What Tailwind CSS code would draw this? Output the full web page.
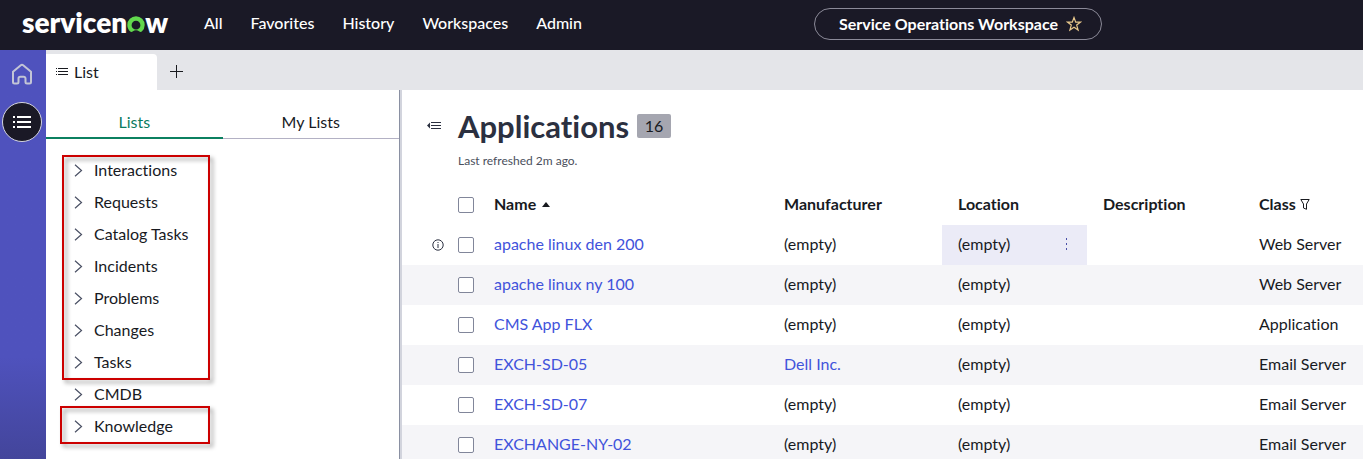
<!DOCTYPE html>
<html lang="en">
<head>
  <meta charset="UTF-8">
  <meta name="viewport" content="width=device-width, initial-scale=1.0">
  <title>Service Operations Workspace</title>
  <script src="https://cdn.jsdelivr.net/npm/@tailwindcss/browser@4"></script>
</head>
<body class="h-screen overflow-hidden flex flex-col bg-white font-['Lato',sans-serif] [font-variant-ligatures:none] text-base text-[#181a1f]">

  <!-- Top bar -->
  <header class="h-[50px] shrink-0 flex items-center bg-[#1a1926] text-white">
    <a href="#" class="ml-[22px] w-[182px] shrink-0 flex items-center text-[28px] leading-8 font-extrabold pb-[6px]" aria-label="servicenow">
      <span>servicen</span>
      <svg class="w-[18px] h-[17px] mt-1 shrink-0" viewBox="0 0 18 17" fill="#62d84e">
        <path d="M9 .3A8.700 8.700 0 0 0 .3 9c0 2.600 1.100 4.900 2.900 6.500.7.600 1.700.700 2.400.100a5.700 5.700 0 0 1 6.800 0c.7.600 1.700.500 2.400-.1A8.700 8.700 0 0 0 17.700 9 8.700 8.700 0 0 0 9 .3zm0 13.300a4.400 4.400 0 1 1 0-8.800 4.400 4.400 0 0 1 0 8.800z"/>
      </svg>
      <span>w</span>
    </a>
    <nav class="flex gap-7 font-medium pb-1">
      <a href="#">All</a>
      <a href="#">Favorites</a>
      <a href="#">History</a>
      <a href="#">Workspaces</a>
      <a href="#">Admin</a>
    </nav>
    <button class="ml-auto mr-[261px] mb-[2px] h-8 px-6 w-[288px] shrink-0 flex items-center gap-2 rounded-full border border-[#8b8a98] font-bold whitespace-nowrap">
      Service Operations Workspace
      <svg class="w-4 h-4 shrink-0" viewBox="0 0 16 16" fill="none" stroke="#e8c88c" stroke-width="1.200" stroke-linejoin="miter">
        <path d="M8 1.500l1.700 4.600h4.900l-3.900 3 1.400 4.900L8 11.200 3.900 14l1.400-4.900-3.900-3h4.900z"/>
      </svg>
    </button>
  </header>

  <div class="flex flex-1 min-h-0">
    <!-- Icon rail -->
    <aside class="w-[46px] shrink-0 bg-linear-to-b from-[#4f52bd] from-75% to-[#43459b] flex flex-col items-center pt-[12px] pr-[2px]">
      <button aria-label="Home">
        <svg class="w-6 h-6" viewBox="0 0 24 24" fill="none" stroke="#c3c5d6" stroke-width="2" stroke-linejoin="round">
          <path d="M3 9.800 10.800 3.300a1.900 1.900 0 0 1 2.400 0L21 9.800v10.200a1.500 1.500 0 0 1-1.500 1.500h-2.500a1.500 1.500 0 0 1-1.500-1.500v-3.500a1.800 1.800 0 0 0-1.800-1.800h-3.400a1.800 1.800 0 0 0-1.800 1.800v3.500a1.500 1.500 0 0 1-1.500 1.500H4.500A1.500 1.500 0 0 1 3 20z"/>
        </svg>
      </button>
      <button class="mt-4 w-10 h-10 rounded-full bg-[#1a1926] border border-[#d5d6df] flex items-center justify-center" aria-label="Lists">
        <svg class="w-5 h-4" viewBox="0 0 20 16" fill="#fff">
          <path d="M1 2h2v2H1zM5 2h14v2H5zM1 7h2v2H1zM5 7h14v2H5zM1 12h2v2H1zM5 12h14v2H5z"/>
        </svg>
      </button>
    </aside>

    <div class="flex-1 min-w-0 flex flex-col">
      <!-- Open tabs -->
      <div class="h-10 shrink-0 bg-[#e4e5e9] flex items-end">
        <button class="w-[111px] h-9 pl-[10px] pb-px bg-white rounded-tr-sm flex items-center gap-[6px]">
          <svg class="w-3 h-3" viewBox="0 0 12 12" fill="#181a1f">
            <path d="M0 2h1v1H0zM2 2h10v1H2zM0 5h1v1H0zM2 5h10v1H2zM0 8h1v1H0zM2 8h10v1H2z"/>
          </svg>
          List
        </button>
        <button class="h-9 w-[39px] pb-px flex items-center justify-center" aria-label="New tab">
          <svg class="w-[13px] h-[13px]" viewBox="0 0 13 13" fill="#181a1f"><path d="M6 0h1v6h6v1H7v6H6V7H0V6h6z"/></svg>
        </button>
      </div>

      <div class="flex flex-1 min-h-0">
        <!-- Lists panel -->
        <section class="w-[356px] shrink-0 border-r-2 border-[#d2d4dd]">
          <div class="h-full border-r border-[#8a90a2]">
            <div class="grid grid-cols-2 pt-4">
              <button class="h-[33px] border-b-2 border-[#0b8060] text-[#0b7c5f]">Lists</button>
              <button class="h-[33px] border-b border-[#b3b1c4]">My Lists</button>
            </div>
            <div class="relative mt-4">
              <ul id="treeTop"></ul>
              <div class="absolute left-4 top-0 w-[148px] h-[225px] border-2 border-[#cc0000] drop-shadow-[3px_3px_2px_rgba(0,0,0,0.4)] pointer-events-none"></div>
            </div>
            <ul id="treeMiddle"></ul>
            <div class="relative">
              <ul id="treeBottom"></ul>
              <div class="absolute left-[14px] -top-[5px] w-[150px] h-[38px] border-2 border-[#cc0000] drop-shadow-[3px_3px_2px_rgba(0,0,0,0.4)] pointer-events-none"></div>
            </div>
          </div>
        </section>

        <!-- Records -->
        <main class="flex-1 min-w-0">
          <div class="flex pt-4 pl-6">
            <button class="w-8 h-10 flex items-center" aria-label="Collapse list panel">
              <svg class="w-4 h-4" viewBox="0 0 16 16" fill="#2b3040">
                <path d="M1 7.500 4 4.500v6zM5 4h10v1H5zM5 7h10v1H5zM5 10h10v1H5z"/>
              </svg>
            </button>
            <div>
              <div class="flex items-center gap-2">
                <h1 class="text-[31px] leading-10 font-bold text-[#2b3040]">Applications</h1>
                <span class="h-6 w-[34px] rounded-xs bg-[#a5a6b0] text-center leading-6">16</span>
              </div>
              <p class="mt-[7px] text-xs leading-4 text-[#4a4f5c]">Last refreshed 2m ago.</p>
            </div>
          </div>

          <table class="mt-4 w-full table-fixed text-left">
            <colgroup>
              <col class="w-[50px]">
              <col class="w-[26px]">
              <col class="w-[290px]">
              <col class="w-[174px]">
              <col class="w-[145px]">
              <col class="w-[156px]">
              <col>
            </colgroup>
            <thead>
              <tr class="h-10">
                <th></th>
                <th class="pl-[6px]"><input type="checkbox" aria-label="Select all" class="block appearance-none w-4 h-4 border border-[#81869a] rounded-xs bg-white"></th>
                <th class="pl-4 pb-[2px] font-bold">
                  <span class="flex items-center gap-[6px]">Name
                    <svg class="w-2 h-[5px]" viewBox="0 0 8 5" fill="#181a1f"><path d="M0 5 4 0l4 5z"/></svg>
                  </span>
                </th>
                <th class="pl-4 pb-[2px] font-bold">Manufacturer</th>
                <th class="pl-4 pb-[2px] font-bold">Location</th>
                <th class="pl-4 pb-[2px] font-bold">Description</th>
                <th class="pl-4 pb-[2px] font-bold">
                  <span class="flex items-center gap-1">Class
                    <svg class="w-[10px] h-[11px]" viewBox="0 0 10 11" fill="none" stroke="#181a1f"><path d="M.8.500h8.400L6.500 5v5.300l-3-1.300V5z"/></svg>
                  </span>
                </th>
              </tr>
            </thead>
            <tbody id="records"></tbody>
          </table>
        </main>
      </div>
    </div>
  </div>

  <script>
    const records = [
      { name: 'apache linux den 200', manufacturer: '', type: 'Web Server', active: true },
      { name: 'apache linux ny 100', manufacturer: '', type: 'Web Server' },
      { name: 'CMS App FLX', manufacturer: '', type: 'Application' },
      { name: 'EXCH-SD-05', manufacturer: 'Dell Inc.', type: 'Email Server' },
      { name: 'EXCH-SD-07', manufacturer: '', type: 'Email Server' },
      { name: 'EXCHANGE-NY-02', manufacturer: '', type: 'Email Server' }
    ];

    function renderTree(id, items) {
      document.getElementById(id).innerHTML = items.map(item => `
        <li>
          <button class="h-8 pl-7 pb-[2px] flex items-center gap-[11px]">
            <svg class="w-[9px] h-[13px]" viewBox="0 0 9 13" fill="none" stroke="#4a5064" stroke-width="1.200"><path d="M1 .8 7.500 6.500 1 12.200"/></svg>
            ${item}
          </button>
        </li>`).join('');
    }

    // Info icon and cell menu only show on the active row
    const infoIcon = `
      <button class="block ml-[30px]" aria-label="Preview record">
        <svg class="w-3 h-3" viewBox="0 0 12 12" fill="none" stroke="#2b3040"><circle cx="6" cy="6" r="5.200"/><path d="M6 5v4M6 3v1"/></svg>
      </button>`;
    const cellMenu = `
      <button class="mr-[18px]" aria-label="Cell actions">
        <svg class="w-[5px] h-3" viewBox="0 0 5 12" fill="#4a4fa8"><path d="M2 0h1v2H2zM2 5h1v2H2zM2 10h1v2H2z"/></svg>
      </button>`;

    function renderRecords() {
      document.getElementById('records').innerHTML = records.map(r => `
        <tr class="h-10 even:bg-[#f5f5f8]">
          <td>${r.active ? infoIcon : ''}</td>
          <td class="pl-[6px]"><input type="checkbox" aria-label="Select ${r.name}" class="block appearance-none w-4 h-4 border border-[#81869a] rounded-xs bg-white"></td>
          <td class="pl-4 pb-[2px]"><a href="#" class="text-[#4153db]">${r.name}</a></td>
          <td class="pl-4 pb-[2px]">${r.manufacturer ? `<a href="#" class="text-[#4153db]">${r.manufacturer}</a>` : '(empty)'}</td>
          <td class="pl-4 pb-[2px] ${r.active ? 'bg-[#ebebf7]' : ''}"><span class="flex items-center justify-between">(empty) ${r.active ? cellMenu : ''}</span></td>
          <td></td>
          <td class="pl-4 pb-[2px] whitespace-nowrap">${r.type}</td>
        </tr>`).join('');
    }

    renderTree('treeTop', ['Interactions', 'Requests', 'Catalog Tasks', 'Incidents', 'Problems', 'Changes', 'Tasks']);
    renderTree('treeMiddle', ['CMDB']);
    renderTree('treeBottom', ['Knowledge']);
    renderRecords();
  </script>
</body>
</html>
